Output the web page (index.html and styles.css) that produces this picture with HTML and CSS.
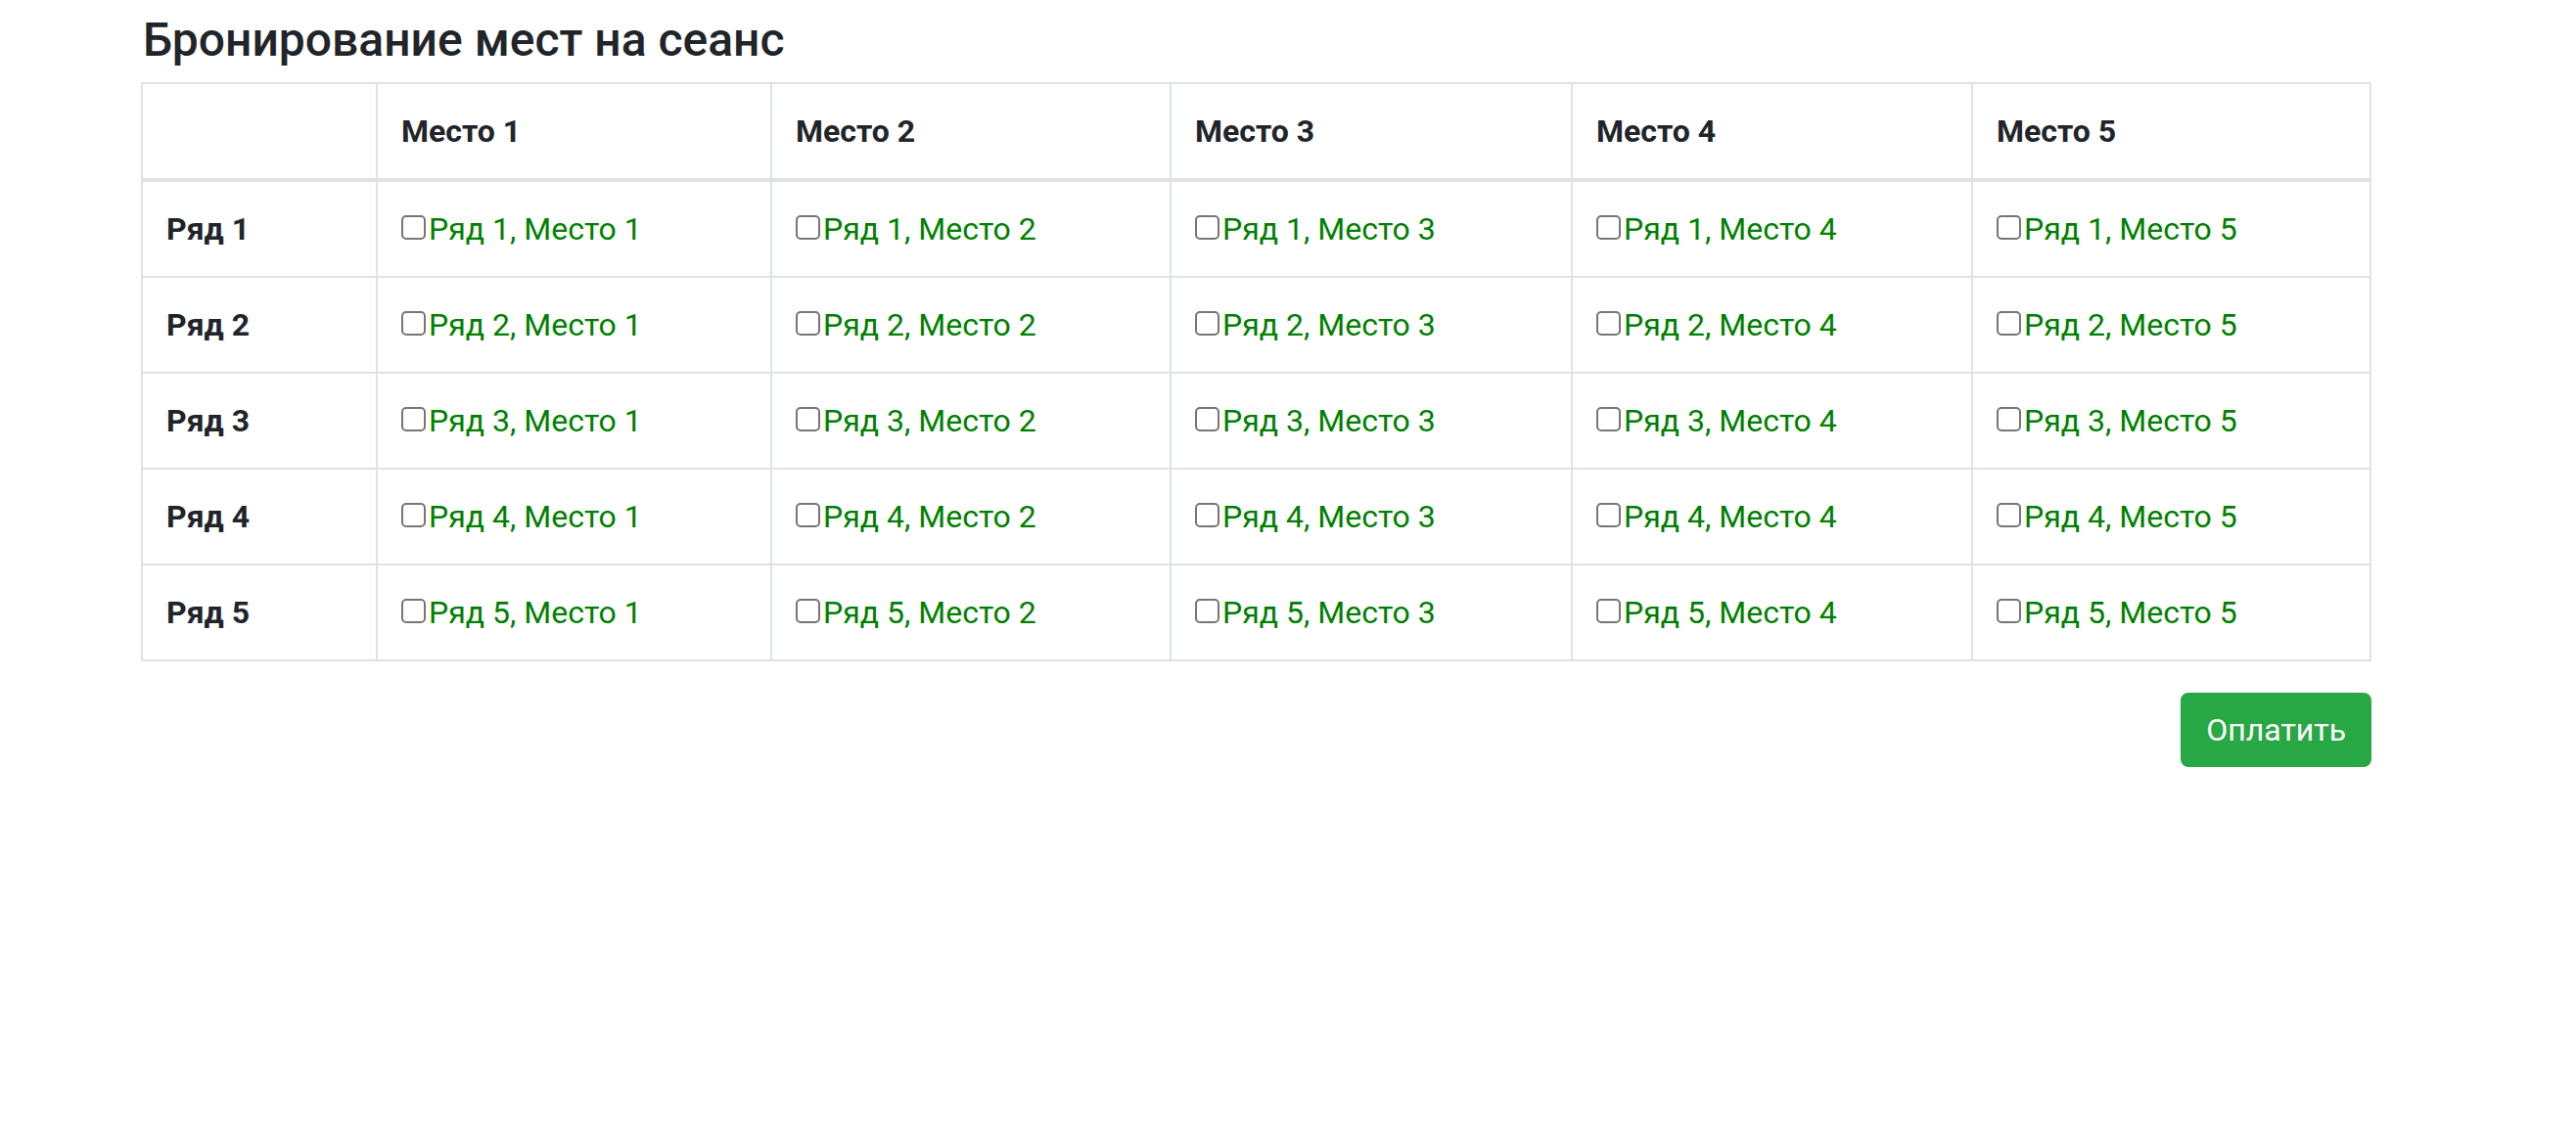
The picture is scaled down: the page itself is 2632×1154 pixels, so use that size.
FILE: index.html
```html
<!DOCTYPE html>
<html lang="ru">
<head>
<meta charset="utf-8">
<title>Бронирование мест на сеанс</title>
<link rel="stylesheet" href="styles.css">
</head>
<body>
<div class="container">
  <h4 class="title">Бронирование мест на сеанс</h4>
  <table class="seats">
    <colgroup>
      <col class="c0"><col class="c1"><col class="c2"><col class="c3"><col class="c4"><col class="c5">
    </colgroup>
    <thead>
      <tr><th></th><th>Место 1</th><th>Место 2</th><th>Место 3</th><th>Место 4</th><th>Место 5</th></tr>
    </thead>
    <tbody>
      <tr><th>Ряд 1</th>
        <td><label class="seat"><input type="checkbox">Ряд 1, Место 1</label></td>
        <td><label class="seat"><input type="checkbox">Ряд 1, Место 2</label></td>
        <td><label class="seat"><input type="checkbox">Ряд 1, Место 3</label></td>
        <td><label class="seat"><input type="checkbox">Ряд 1, Место 4</label></td>
        <td><label class="seat"><input type="checkbox">Ряд 1, Место 5</label></td></tr>
      <tr><th>Ряд 2</th>
        <td><label class="seat"><input type="checkbox">Ряд 2, Место 1</label></td>
        <td><label class="seat"><input type="checkbox">Ряд 2, Место 2</label></td>
        <td><label class="seat"><input type="checkbox">Ряд 2, Место 3</label></td>
        <td><label class="seat"><input type="checkbox">Ряд 2, Место 4</label></td>
        <td><label class="seat"><input type="checkbox">Ряд 2, Место 5</label></td></tr>
      <tr><th>Ряд 3</th>
        <td><label class="seat"><input type="checkbox">Ряд 3, Место 1</label></td>
        <td><label class="seat"><input type="checkbox">Ряд 3, Место 2</label></td>
        <td><label class="seat"><input type="checkbox">Ряд 3, Место 3</label></td>
        <td><label class="seat"><input type="checkbox">Ряд 3, Место 4</label></td>
        <td><label class="seat"><input type="checkbox">Ряд 3, Место 5</label></td></tr>
      <tr><th>Ряд 4</th>
        <td><label class="seat"><input type="checkbox">Ряд 4, Место 1</label></td>
        <td><label class="seat"><input type="checkbox">Ряд 4, Место 2</label></td>
        <td><label class="seat"><input type="checkbox">Ряд 4, Место 3</label></td>
        <td><label class="seat"><input type="checkbox">Ряд 4, Место 4</label></td>
        <td><label class="seat"><input type="checkbox">Ряд 4, Место 5</label></td></tr>
      <tr><th>Ряд 5</th>
        <td><label class="seat"><input type="checkbox">Ряд 5, Место 1</label></td>
        <td><label class="seat"><input type="checkbox">Ряд 5, Место 2</label></td>
        <td><label class="seat"><input type="checkbox">Ряд 5, Место 3</label></td>
        <td><label class="seat"><input type="checkbox">Ряд 5, Место 4</label></td>
        <td><label class="seat"><input type="checkbox">Ряд 5, Место 5</label></td></tr>
    </tbody>
  </table>
  <div class="actions">
    <button class="btn-pay" type="button">Оплатить</button>
  </div>
</div>
</body>
</html>
```
FILE: styles.css
```css
html, body {
  margin: 0;
  padding: 0;
  background: #fff;
}
body {
  font-family: Roboto, "Noto Sans", sans-serif;
  font-size: 32px;
  line-height: 48px;
  color: #212529;
}
.container {
  width: 2279px;
  padding-left: 144px;
  padding-top: 12px;
}
.title {
  margin: 0 0 14px 2px;
  font-size: 48px;
  line-height: 58px;
  font-weight: 500;
  color: #212529;
}
.seats {
  width: 2279px;
  table-layout: fixed;
  border-collapse: collapse;
  margin-bottom: 32px;
}
.c0 { width: 240px; }
.c1 { width: 403px; }
.c2 { width: 408px; }
.c3 { width: 410px; }
.c4 { width: 409px; }
.seats th,
.seats td {
  border: 2px solid #dee2e6;
  padding: 24px;
  text-align: left;
  vertical-align: top;
}
.seats th {
  font-weight: 700;
}
.seats thead th {
  border-bottom-width: 4px;
}
.seat {
  color: #008000;
  white-space: nowrap;
}
.seat input {
  -webkit-appearance: none;
  appearance: none;
  box-sizing: border-box;
  display: inline-block;
  width: 25px;
  height: 25px;
  margin: 0 3px 0 0;
  border: 2px solid #767676;
  border-radius: 5px;
  background: #fff;
  vertical-align: baseline;
}
.actions {
  display: flex;
  justify-content: flex-end;
}
.btn-pay {
  font-family: Roboto, sans-serif;
  font-size: 32px;
  line-height: 48px;
  color: #fff;
  background: #28a745;
  border: 2px solid #28a745;
  border-radius: 8px;
  padding: 12px 24px;
}
```
